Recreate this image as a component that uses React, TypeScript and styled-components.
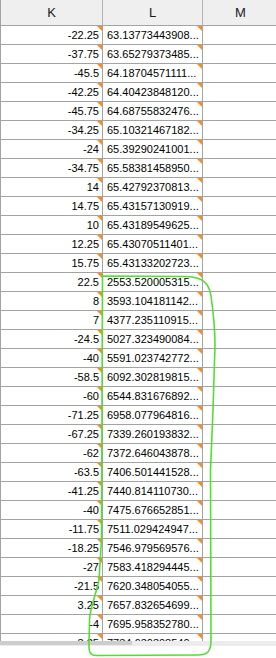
import styled, { createGlobalStyle } from "styled-components";

const GlobalStyle = createGlobalStyle`
    html, body {
        margin: 0;
        padding: 0;
        background: #ffffff;
    }
    body {
        font-family: "Liberation Sans", Arial, sans-serif;
    }
`;

const ROWS: [string, string][] = [
    ["-22.25", "63.13773443908..."],
    ["-37.75", "63.65279373485..."],
    ["-45.5", "64.18704571111..."],
    ["-42.25", "64.40423848120..."],
    ["-45.75", "64.68755832476..."],
    ["-34.25", "65.10321467182..."],
    ["-24", "65.39290241001..."],
    ["-34.75", "65.58381458950..."],
    ["14", "65.42792370813..."],
    ["14.75", "65.43157130919..."],
    ["10", "65.43189549625..."],
    ["12.25", "65.43070511401..."],
    ["15.75", "65.43133202723..."],
    ["22.5", "2553.520005315..."],
    ["8", "3593.104181142..."],
    ["7", "4377.235110915..."],
    ["-24.5", "5027.323490084..."],
    ["-40", "5591.023742772..."],
    ["-58.5", "6092.302819815..."],
    ["-60", "6544.831676892..."],
    ["-71.25", "6958.077964816..."],
    ["-67.25", "7339.260193832..."],
    ["-62", "7372.646043878..."],
    ["-63.5", "7406.501441528..."],
    ["-41.25", "7440.814110730..."],
    ["-40", "7475.676652851..."],
    ["-11.75", "7511.029424947..."],
    ["-18.25", "7546.979569576..."],
    ["-27", "7583.418294445..."],
    ["-21.5", "7620.348054055..."],
    ["3.25", "7657.832654699..."],
    ["-4", "7695.958352780..."],
    ["3.25", "7734.630308540..."],
];

const Sheet = styled.div`
    position: relative;
    width: 276px;
    height: 658px;
    overflow: hidden;
    display: flex;
    flex-direction: column;
    background: #ffffff;
`;

const Grid = styled.div`
    display: grid;
    grid-template-columns: 102px 100px 76px;
    border-left: 1px solid #a3a3a3;
`;

const HeaderCell = styled.div`
    height: 25px;
    background: #efefef;
    border-right: 1px solid #b4b4b4;
    border-bottom: 1px solid #a3a3a3;
    display: flex;
    align-items: center;
    justify-content: center;
    font-size: 13px;
    color: #1a1a1a;
`;

const Body = styled.div`
    height: 615px;
    overflow: hidden;
`;

const Cell = styled.div<{ $align: "left" | "right"; $mark?: boolean }>`
    position: relative;
    height: 18px;
    border-right: 1px solid #a3a3a3;
    border-bottom: 1px solid #a3a3a3;
    display: flex;
    align-items: center;
    justify-content: ${(p) => (p.$align === "right" ? "flex-end" : "flex-start")};
    padding: ${(p) => (p.$align === "right" ? "0 3px 0 0" : "0 0 0 4px")};
    font-size: 11px;
    color: #000000;
    white-space: nowrap;
    overflow: hidden;

    &::after {
        content: "";
        display: ${(p) => (p.$mark ? "block" : "none")};
        position: absolute;
        top: 0;
        right: 0;
        border-top: 5px solid #ff8c1a;
        border-left: 5px solid transparent;
    }
`;

const ScrollTrack = styled.div`
    height: 5px;
    background: #ececec;
    display: flex;
`;

const ScrollThumb = styled.div`
    width: 132px;
    height: 4px;
    background: #cdcdcd;
`;

const Selection = styled.svg`
    position: absolute;
    top: 0;
    left: 0;
    pointer-events: none;
`;

export default function App() {
    return (
        <>
            <GlobalStyle />
            <Sheet>
                <Grid>
                    <HeaderCell>K</HeaderCell>
                    <HeaderCell>L</HeaderCell>
                    <HeaderCell>M</HeaderCell>
                </Grid>
                <Body>
                    <Grid>
                        {ROWS.map(([k, l], i) => (
                            <>
                                <Cell key={`k${i}`} $align="right" $mark>{k}</Cell>
                                <Cell key={`l${i}`} $align="left" $mark>{l}</Cell>
                                <Cell key={`m${i}`} $align="left" />
                            </>
                        ))}
                    </Grid>
                </Body>
                <ScrollTrack>
                    <ScrollThumb />
                </ScrollTrack>
                <Selection width="276" height="658" viewBox="0 0 276 658">
                    <path
                        d="M102.5 276 L186 276.5 C203 277 209 283 211 296 C213 310 215 325 215 345 L213 410 L210.5 470 L211 640 C211 652 207 655 198 655 L96 655.5 C90 655.5 89 652 89 645 L89.5 620 C90 608 95 598 99 580 L101.5 540 L102.5 276"
                        fill="none"
                        stroke="#55dd33"
                        strokeWidth="1.6"
                        strokeLinecap="round"
                        strokeLinejoin="round"
                    />
                </Selection>
            </Sheet>
        </>
    );
}
